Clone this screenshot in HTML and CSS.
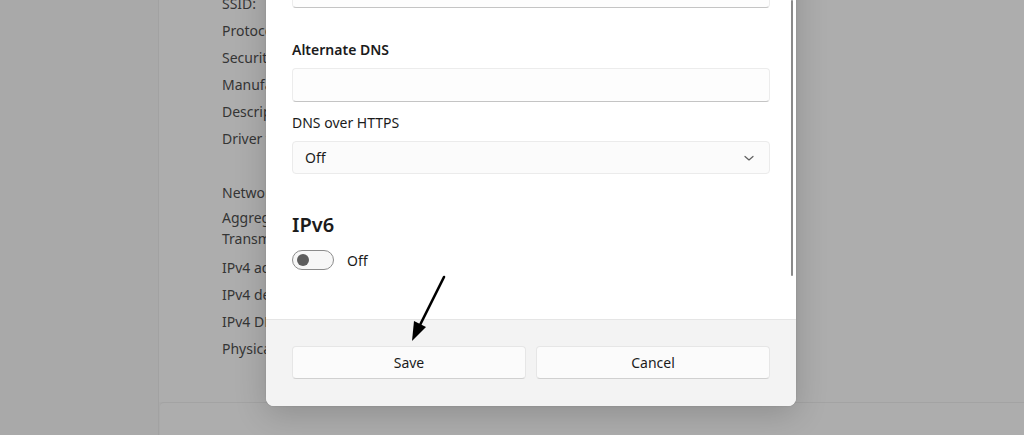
FILE: index.html
```html
<!DOCTYPE html>
<html lang="en">
<head>
  <meta charset="UTF-8" />
  <meta name="viewport" content="width=device-width, initial-scale=1.0"/>
  <title>Edit DNS settings</title>
  <link rel="stylesheet" href="styles.css">
</head>
<body>
  <!-- settings page behind the dialog -->
  <div class="page">
    <div class="side"></div>
    <div class="cards">
      <div class="card props">
        <div class="row">SSID:</div>
        <div class="row">Protocol:</div>
        <div class="row">Security type:</div>
        <div class="row">Manufacturer:</div>
        <div class="row">Description:</div>
        <div class="row">Driver version:</div>
        <div class="row gap"></div>
        <div class="row">Network band:</div>
        <div class="row two">Aggregated link speed<br>Transmit/Receive:</div>
        <div class="row">IPv4 address:</div>
        <div class="row">IPv4 default gateway:</div>
        <div class="row">IPv4 DNS servers:</div>
        <div class="row">Physical address (MAC):</div>
      </div>
      <div class="card next"></div>
    </div>
  </div>

  <!-- dialog -->
  <div class="dialog">
    <div class="dialog-body">
      <div class="field"></div>

      <label class="label strong">Alternate DNS</label>
      <div class="field"></div>

      <label class="label">DNS over HTTPS</label>
      <div class="select">
        <span>Off</span>
        <svg width="12" height="12" viewBox="0 0 12 12"><path d="M2 4.5 L6 8 L10 4.5" fill="none" stroke="#5f5f5f" stroke-width="1.2" stroke-linecap="round" stroke-linejoin="round"/></svg>
      </div>

      <h3 class="section">IPv6</h3>
      <div class="toggle-row">
        <span class="toggle"><span class="knob"></span></span>
        <span>Off</span>
      </div>
    </div>
    <div class="dialog-footer">
      <button class="btn">Save</button>
      <button class="btn">Cancel</button>
    </div>
    <div class="scrollbar"></div>
  </div>

  <!-- annotation arrow -->
  <svg class="arrow" width="60" height="80" viewBox="0 0 60 80">
    <line x1="44" y1="6" x2="19" y2="56" stroke="#000" stroke-width="2.6" stroke-linecap="round"/>
    <polygon points="12,70 14,50 26,56" fill="#000"/>
  </svg>
</body>
</html>
```

FILE: styles.css
```css
body {
  margin: 0;
  height: 435px;
  overflow: hidden;
  background: #a9a9a9;
  font-family: "Noto Sans", "Open Sans", sans-serif;
  font-size: 14px;
  color: #1b1b1b;
  position: relative;
}
.page {
  display: flex;
  height: 435px;
}
.side {
  width: 158px;
  border-right: 1px solid #a2a2a2;
}
.cards {
  flex: 1;
  display: flex;
  flex-direction: column;
}
.card {
  background: #adadad;
}
.props {
  height: 412px;
  flex-shrink: 0;
  padding: 0 0 0 63px;
  box-sizing: border-box;
  color: #353535;
  margin-top: -10px;
}
.row {
  height: 27px;
  line-height: 27px;
}
.row.gap {
  height: 27px;
}
.row.two {
  height: 48px;
  line-height: 21px;
  padding-top: 1px;
  box-sizing: border-box;
}
.next {
  flex: 1;
  margin-left: 1px;
  border-top: 1px solid #a3a3a3;
  border-radius: 4px 0 0 0;
}

.dialog {
  position: absolute;
  left: 266px;
  top: -52px;
  width: 530px;
  background: #fff;
  border-radius: 0 0 8px 8px;
  box-shadow: 0 8px 32px rgba(0, 0, 0, 0.18), 0 0 2px rgba(0, 0, 0, 0.12);
  overflow: hidden;
}
.dialog-body {
  padding: 26px 26px 49px;
  display: flex;
  flex-direction: column;
}
.field {
  height: 34px;
  box-sizing: border-box;
  background: #fdfdfd;
  border: 1px solid #ececec;
  border-bottom: 1px solid #c4c4c4;
  border-radius: 4px;
}
.label {
  line-height: 20px;
  margin: 11px 0 8px;
}
.label.strong {
  font-weight: 600;
  margin-top: 32px;
}
.select {
  height: 33px;
  box-sizing: border-box;
  background: #fbfbfb;
  border: 1px solid #ebebeb;
  border-radius: 4px;
  display: flex;
  align-items: center;
  justify-content: space-between;
  padding: 0 14px 0 12px;
}
.section {
  font-size: 20px;
  font-weight: 600;
  line-height: 28px;
  margin: 37px 0 11px;
  color: #1b1b1b;
}
.toggle-row {
  display: flex;
  align-items: center;
  gap: 13px;
  height: 20px;
}
.toggle {
  width: 42px;
  height: 20px;
  box-sizing: border-box;
  border: 1px solid #8c8c8c;
  border-radius: 10px;
  background: #f7f7f7;
  display: flex;
  align-items: center;
  padding-left: 4px;
}
.knob {
  width: 12px;
  height: 12px;
  border-radius: 50%;
  background: #5d5d5d;
}
.dialog-footer {
  background: #f3f3f3;
  border-top: 1px solid #e5e5e5;
  padding: 26px 26px 27px;
  display: flex;
  gap: 10px;
}
.btn {
  flex: 1;
  height: 33px;
  font: inherit;
  color: #1b1b1b;
  background: #fbfbfb;
  border: 1px solid #e6e6e6;
  border-bottom-color: #d0d0d0;
  border-radius: 4px;
}
.scrollbar {
  position: absolute;
  right: 3px;
  top: 52px;
  width: 2px;
  height: 276px;
  background: #8a8a8a;
  border-radius: 1px;
}
.arrow {
  position: absolute;
  left: 400px;
  top: 271px;
}
```
